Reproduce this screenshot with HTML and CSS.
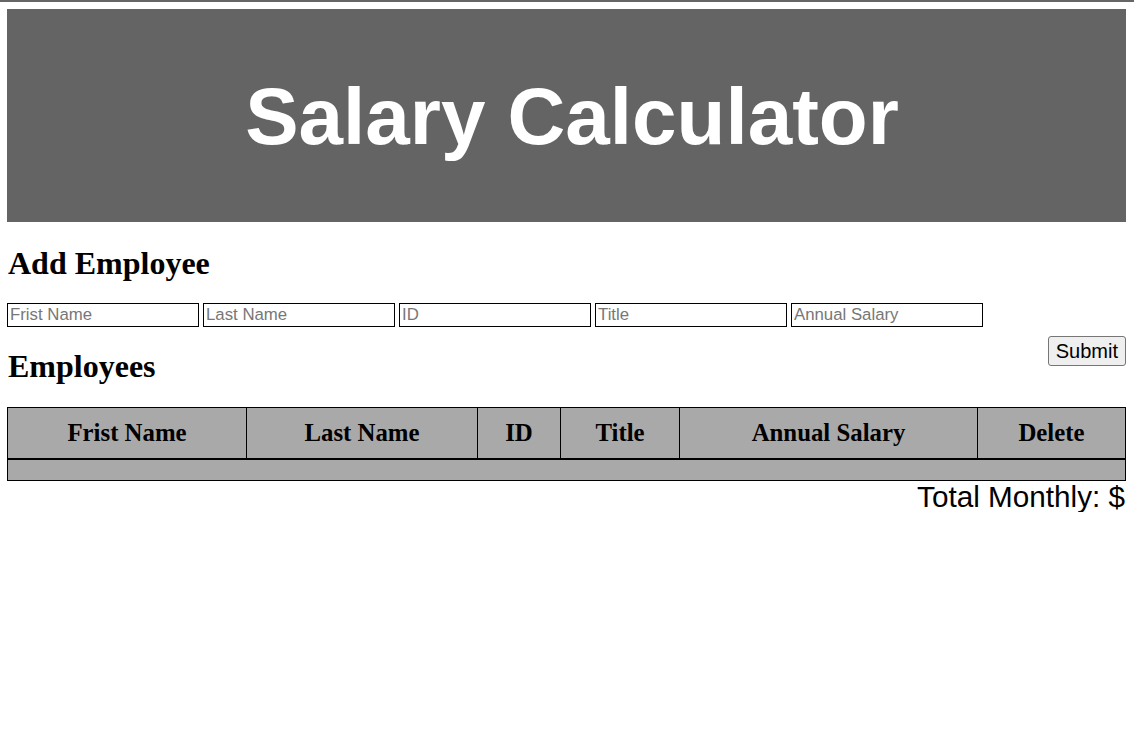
FILE: index.html
```html
<!DOCTYPE html>
<html lang="en">
<head>
<meta charset="utf-8">
<title>Salary Calculator</title>
<link rel="stylesheet" href="styles.css">
</head>
<body>
<div class="topline"></div>
<div class="page">
  <header class="banner">
    <h1 class="banner-title">Salary Calculator</h1>
  </header>
  <h2 class="section-title add-title">Add Employee</h2>
  <div class="entry-row">
    <input class="field" type="text" placeholder="Frist Name">
    <input class="field" type="text" placeholder="Last Name">
    <input class="field" type="text" placeholder="ID">
    <input class="field" type="text" placeholder="Title">
    <input class="field" type="text" placeholder="Annual Salary">
  </div>
  <div class="list-row">
    <h2 class="section-title list-title">Employees</h2>
    <button class="submit-btn" type="button">Submit</button>
  </div>
  <table class="emp-table">
    <colgroup>
      <col class="c1"><col class="c2"><col class="c3"><col class="c4"><col class="c5"><col class="c6">
    </colgroup>
    <thead>
      <tr>
        <th>Frist Name</th>
        <th>Last Name</th>
        <th>ID</th>
        <th>Title</th>
        <th>Annual Salary</th>
        <th>Delete</th>
      </tr>
    </thead>
    <tbody>
      <tr class="empty-row"><td colspan="6"></td></tr>
    </tbody>
  </table>
  <p class="total">Total Monthly: $</p>
</div>
</body>
</html>
```
FILE: styles.css
```css
html, body {
  margin: 0;
  padding: 0;
  background: #ffffff;
}

.topline {
  height: 2px;
  background: #666666;
}

.page {
  padding: 7px 8px 0 7px;
}

.banner {
  background: #646464;
  padding: 62px 0 59px 11px;
  text-align: center;
}

.banner-title {
  margin: 0;
  font-family: "Liberation Sans", Arial, sans-serif;
  font-weight: bold;
  font-size: 80px;
  line-height: 92px;
  color: #ffffff;
}

.section-title {
  font-family: "Liberation Serif", "Times New Roman", serif;
  font-weight: bold;
  font-size: 32px;
  line-height: 37px;
  color: #000000;
  margin: 0;
  padding-left: 1px;
}

.add-title {
  margin-top: 23px;
}

.entry-row {
  display: flex;
  gap: 4px;
  margin-top: 21px;
}

.field {
  box-sizing: border-box;
  width: 192px;
  height: 24px;
  margin: 0;
  padding: 1px 2px;
  border: 1px solid #000000;
  font-family: "Liberation Sans", Arial, sans-serif;
  font-size: 16.8px;
  color: #000;
  background: #fff;
}

.field::placeholder {
  color: #777777;
}

.list-row {
  display: flex;
  justify-content: space-between;
  align-items: flex-start;
  margin-top: 9px;
}

.list-title {
  margin-top: 12px;
}

.submit-btn {
  box-sizing: border-box;
  height: 30px;
  padding: 0 7px;
  margin: 0;
  font-family: "Liberation Sans", Arial, sans-serif;
  font-size: 20px;
  color: #000;
  background: #efefef;
  border: 1px solid #767676;
  border-radius: 3px;
}

.emp-table {
  margin-top: 22px;
  width: 100%;
  table-layout: fixed;
  border-collapse: collapse;
  background: #a9a9a9;
  border: 1px solid #000;
}

.c1 { width: 239px; }
.c2 { width: 231px; }
.c3 { width: 83px; }
.c4 { width: 119px; }
.c5 { width: 298px; }
.c6 { width: auto; }

.emp-table th {
  font-family: "Liberation Serif", "Times New Roman", serif;
  font-weight: bold;
  font-size: 24.8px;
  color: #000;
  height: 50px;
  padding: 0;
  border: 1px solid #000;
  border-bottom: 2px solid #000;
  text-align: center;
  vertical-align: middle;
}

.empty-row td {
  height: 20px;
  padding: 0;
  border: 1px solid #000;
}

.total {
  margin: 0;
  text-align: right;
  font-family: "Liberation Sans", Arial, sans-serif;
  font-size: 29.7px;
  line-height: 31px;
  color: #000;
  padding-right: 1px;
}
```
